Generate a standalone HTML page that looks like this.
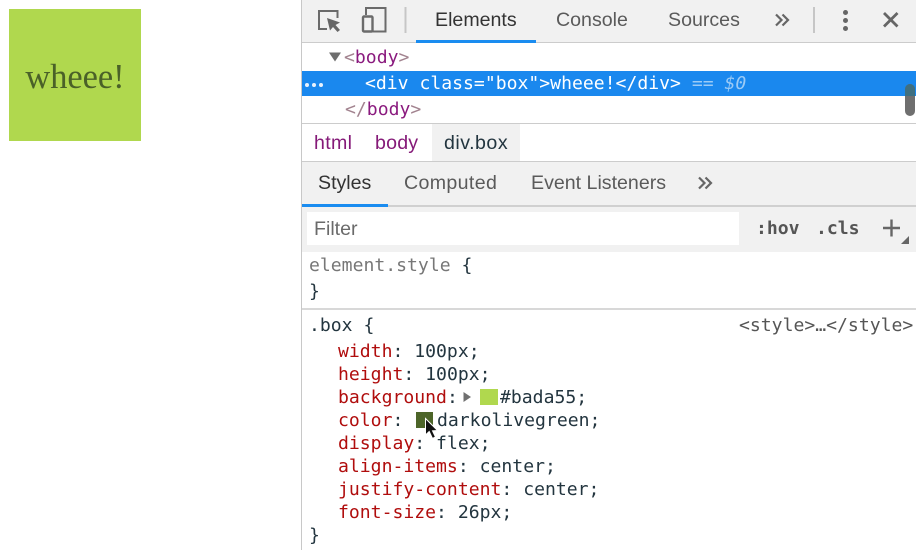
<!DOCTYPE html>
<html>
<head>
<meta charset="utf-8">
<style>
html,body{margin:0;padding:0;width:916px;height:550px;overflow:hidden;background:#fff}
.a{position:absolute;white-space:pre;line-height:24px}
.s{font-family:"Liberation Sans",sans-serif;font-size:19.6px;color:#5a5a5a}
.m{font-family:"DejaVu Sans Mono","Liberation Mono",monospace;font-size:18.1px;color:#23353f}
.r{position:absolute}
.p{color:#b00d0d}
.t{color:#8a1a7e}
.g{color:#a2838f}
</style>
</head>
<body>
<div class="r" style="left:9px;top:9px;width:132px;height:132px;background:#b0d84e"></div>
<div class="a" style="left:9px;top:59px;width:132px;height:36px;line-height:36px;text-align:center;font-family:'Liberation Serif',serif;font-size:34.4px;color:#4a6128">wheee!</div>

<div class="r" style="left:301px;top:0;width:1px;height:550px;background:#c8c8c8"></div>

<!-- top toolbar -->
<div class="r" style="left:302px;top:0;width:614px;height:42px;background:#f1f1f1"></div>
<div class="r" style="left:302px;top:42px;width:614px;height:1px;background:#cccccc"></div>
<div class="r" style="left:416px;top:40px;width:120px;height:3px;background:#1a8cf0"></div>
<svg class="r" style="left:310px;top:0" width="100" height="44">
<path d="M17 29H9V11H27.500V18" fill="none" stroke="#6b6b6b" stroke-width="2"/>
<path d="M17 18L30 22.500L25.500 25L30 30L27.500 32L23 27L20 30.500Z" fill="#666"/>
<path d="M56 15V8H75.500V31.500H62" fill="none" stroke="#6b6b6b" stroke-width="2"/>
<rect x="53" y="16.500" width="9.500" height="15" rx="1" fill="none" stroke="#6b6b6b" stroke-width="2.400"/>
<rect x="94.500" y="7" width="2" height="26" fill="#c6c6c6"/>
</svg>
<div class="a s" style="left:435px;top:8px;color:#333">Elements</div>
<div class="a s" style="left:556px;top:8px">Console</div>
<div class="a s" style="left:668px;top:8px">Sources</div>
<svg class="r" style="left:770px;top:9px" width="24" height="22">
<path d="M6 5.500L11.500 11L6 16.500M12.500 5.500L18 11L12.500 16.500" fill="none" stroke="#666" stroke-width="2.200"/>
</svg>
<div class="r" style="left:813px;top:7px;width:2px;height:26px;background:#c6c6c6"></div>
<div class="r" style="left:843px;top:10px;width:5px;height:5px;border-radius:50%;background:#666"></div>
<div class="r" style="left:843px;top:18px;width:5px;height:5px;border-radius:50%;background:#666"></div>
<div class="r" style="left:843px;top:26px;width:5px;height:5px;border-radius:50%;background:#666"></div>
<svg class="r" style="left:880px;top:9px" width="22" height="22">
<path d="M4 4L17.500 17.500M17.500 4L4 17.500" stroke="#666" stroke-width="2.800" fill="none"/>
</svg>

<!-- DOM tree -->
<svg class="r" style="left:328px;top:50px" width="14" height="14"><path d="M1 2.500H13L7 11.500Z" fill="#6e6e6e"/></svg>
<div class="a m" style="left:344px;top:46px"><span class="g">&lt;</span><span class="t">body</span><span class="g">&gt;</span></div>
<div class="r" style="left:302px;top:71px;width:614px;height:25px;background:#1a88ee"></div>
<div class="r" style="left:305px;top:83px;width:4px;height:4px;border-radius:50%;background:#e8f2fd"></div>
<div class="r" style="left:312px;top:83px;width:4px;height:4px;border-radius:50%;background:#e8f2fd"></div>
<div class="r" style="left:319px;top:83px;width:4px;height:4px;border-radius:50%;background:#e8f2fd"></div>
<div class="a m" style="left:365px;top:72px;color:#fff">&lt;div class="box"&gt;wheee!&lt;/div&gt; <span style="color:#9ccbf6">== <i>$0</i></span></div>
<div class="a m" style="left:345px;top:98px"><span class="g">&lt;/</span><span class="t">body</span><span class="g">&gt;</span></div>
<div class="r" style="left:905px;top:84px;width:10px;height:32px;border-radius:5px;background:#6f6f6f"></div>
<div class="r" style="left:905px;top:84px;width:10px;height:12px;border-radius:5px 5px 0 0;background:#3f6f80"></div>

<!-- breadcrumbs -->
<div class="r" style="left:302px;top:123px;width:614px;height:1px;background:#cccccc"></div>
<div class="r" style="left:432px;top:124px;width:88px;height:37px;background:#f1f1f1"></div>
<div class="a s" style="left:314px;top:131px;color:#851a78;letter-spacing:.3px">html</div>
<div class="a s" style="left:375px;top:131px;color:#851a78;letter-spacing:.2px">body</div>
<div class="a s" style="left:444px;top:131px;color:#23353f;letter-spacing:.5px">div.box</div>

<!-- styles tabs -->
<div class="r" style="left:302px;top:161px;width:614px;height:91px;background:#f1f1f1"></div>
<div class="r" style="left:302px;top:161px;width:614px;height:1px;background:#cccccc"></div>
<div class="r" style="left:302px;top:205px;width:614px;height:2px;background:#d0d0d0"></div>
<div class="r" style="left:302px;top:204px;width:86px;height:3px;background:#1a8cf0"></div>
<div class="a s" style="left:318px;top:171px;color:#333">Styles</div>
<div class="a s" style="left:404px;top:171px;letter-spacing:.35px">Computed</div>
<div class="a s" style="left:531px;top:171px">Event Listeners</div>
<svg class="r" style="left:693px;top:172px" width="24" height="22">
<path d="M6 5.500L11.500 11L6 16.500M12.500 5.500L18 11L12.500 16.500" fill="none" stroke="#666" stroke-width="2.200"/>
</svg>

<!-- filter -->
<div class="r" style="left:307px;top:212px;width:432px;height:33px;background:#fff"></div>
<div class="a s" style="left:314px;top:217px;color:#6a6a6a">Filter</div>
<div class="a m" style="left:756px;top:217px;font-weight:bold;color:#555">:hov</div>
<div class="a m" style="left:816px;top:217px;font-weight:bold;color:#555">.cls</div>
<svg class="r" style="left:880px;top:216px" width="32" height="30">
<path d="M3 12H20M11.500 3.500V20.500" stroke="#666" stroke-width="2.400" fill="none"/>
<path d="M29 20V28H21Z" fill="#666"/>
</svg>

<!-- element.style -->
<div class="a m" style="left:309px;top:254px;color:#777">element.style <span style="color:#23353f">{</span></div>
<div class="a m" style="left:309px;top:280px">}</div>
<div class="r" style="left:302px;top:308px;width:614px;height:2px;background:#d8d8d8"></div>

<!-- .box rule -->
<div class="a m" style="left:309px;top:314px">.box {</div>
<div class="a m" style="left:739px;top:314px;color:#555">&lt;style&gt;…&lt;/style&gt;</div>
<div class="a m" style="left:338px;top:340px"><span class="p">width</span>: 100px;</div>
<div class="a m" style="left:338px;top:363px"><span class="p">height</span>: 100px;</div>
<div class="a m" style="left:338px;top:386px"><span class="p">background</span>:</div>
<svg class="r" style="left:462px;top:391px" width="10" height="12"><path d="M1.500 1V11L9 6Z" fill="#707070"/></svg>
<div class="r" style="left:480px;top:389px;width:18px;height:16px;background:#b0d84e"></div>
<div class="a m" style="left:500px;top:386px">#bada55;</div>
<div class="a m" style="left:338px;top:409px"><span class="p">color</span>:</div>
<div class="r" style="left:416px;top:412px;width:17px;height:16px;background:#4d6529"></div>
<div class="a m" style="left:437px;top:409px">darkolivegreen;</div>
<div class="a m" style="left:338px;top:432px"><span class="p">display</span>: flex;</div>
<div class="a m" style="left:338px;top:455px"><span class="p">align-items</span>: center;</div>
<div class="a m" style="left:338px;top:478px"><span class="p">justify-content</span>: center;</div>
<div class="a m" style="left:338px;top:501px"><span class="p">font-size</span>: 26px;</div>
<div class="a m" style="left:309px;top:524px">}</div>

<!-- cursor -->
<svg class="r" style="left:422px;top:417px" width="20" height="26">
<path d="M3.500 1.500V18L7.200 14.500L10.500 21.500L13.500 20L10.500 13.800L15.500 13.500Z" fill="#111" stroke="#fff" stroke-width="1"/>
</svg>
</body>
</html>
